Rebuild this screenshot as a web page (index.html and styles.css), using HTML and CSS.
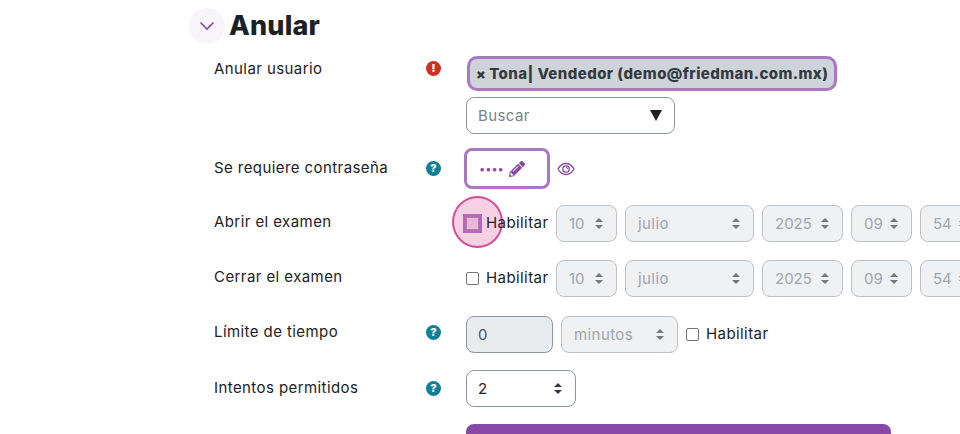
FILE: index.html
```html
<!DOCTYPE html>
<html lang="es">
<head>
<meta charset="utf-8">
<title>Anular</title>
<link rel="stylesheet" href="styles.css">
</head>
<body>
<main class="page">
  <header class="head">
    <span class="toggle"><svg width="16" height="10" viewBox="0 0 16 10"><path d="M1.500 1.500 8 8l6.500-6.500" fill="none" stroke="#8a48a6" stroke-width="1.600"/></svg></span>
    <h2 class="title">Anular</h2>
  </header>

  <section class="row row-user">
    <div class="label">Anular usuario</div>
    <div class="hint"><span class="dot red">!</span></div>
    <div class="field stack">
      <span class="tag"><b class="x">×</b> Tona| Vendedor (demo@friedman.com.mx)</span>
      <div class="search"><span>Buscar</span><span class="tri"></span></div>
    </div>
  </section>

  <section class="row row-pass">
    <div class="label">Se requiere contraseña</div>
    <div class="hint"><span class="dot teal">?</span></div>
    <div class="field inline">
      <span class="passbox"><span class="dots">••••</span>
        <svg width="16" height="16" viewBox="0 0 512 512"><path fill="#8a48a6" d="M497.900 142.100l-46.100 46.100c-4.700 4.700-12.300 4.700-17 0l-111-111c-4.700-4.700-4.700-12.300 0-17l46.100-46.100c18.700-18.700 49.100-18.700 67.900 0l60.100 60.100c18.800 18.700 18.800 49.100 0 67.900zM284.200 99.800L21.600 362.400.4 483.900c-2.900 16.400 11.400 30.600 27.800 27.800l121.500-21.300 262.600-262.600c4.700-4.700 4.700-12.300 0-17l-111-111c-4.800-4.700-12.400-4.700-17.100 0zM124.100 339.900c-5.500-5.500-5.500-14.300 0-19.800l154-154c5.500-5.500 14.300-5.500 19.800 0s5.500 14.300 0 19.800l-154 154c-5.500 5.500-14.300 5.500-19.800 0zM88 424h48v36.300l-64.500 11.300-31.100-31.100L51.700 376H88v48z"/></svg>
      </span>
      <svg class="eye" width="18" height="14" viewBox="0 0 18 14"><path d="M1 7c2-3.600 4.800-5.500 8-5.500S15 3.400 17 7c-2 3.600-4.800 5.500-8 5.500S3 10.600 1 7z" fill="none" stroke="#8a48a6" stroke-width="1.300"/><circle cx="9" cy="7" r="3.200" fill="none" stroke="#8a48a6" stroke-width="1.300"/><path d="M9 5.400a1.600 1.600 0 0 1 1.600 1.600" fill="none" stroke="#8a48a6" stroke-width="1"/></svg>
    </div>
  </section>

  <section class="row row-open">
    <div class="label">Abrir el examen</div>
    <div class="hint"></div>
    <div class="field inline dates">
      <label class="check focus"><span class="box"></span><span class="halo"></span><span class="cap">Habilitar</span></label>
      <span class="sel off w61">10<i class="arrows"></i></span>
      <span class="sel off w129 word">julio<i class="arrows"></i></span>
      <span class="sel off w81">2025<i class="arrows"></i></span>
      <span class="sel off w61">09<i class="arrows"></i></span>
      <span class="sel off w61">54<i class="arrows"></i></span>
    </div>
  </section>

  <section class="row row-close">
    <div class="label">Cerrar el examen</div>
    <div class="hint"></div>
    <div class="field inline dates">
      <label class="check"><span class="box"></span><span class="cap">Habilitar</span></label>
      <span class="sel off w61">10<i class="arrows"></i></span>
      <span class="sel off w129 word">julio<i class="arrows"></i></span>
      <span class="sel off w81">2025<i class="arrows"></i></span>
      <span class="sel off w61">09<i class="arrows"></i></span>
      <span class="sel off w61">54<i class="arrows"></i></span>
    </div>
  </section>

  <section class="row row-limit">
    <div class="label">Límite de tiempo</div>
    <div class="hint"><span class="dot teal">?</span></div>
    <div class="field inline limit">
      <span class="num">0</span>
      <span class="sel off w117 word">minutos<i class="arrows"></i></span>
      <label class="check"><span class="box"></span><span class="cap">Habilitar</span></label>
    </div>
  </section>

  <section class="row row-tries">
    <div class="label">Intentos permitidos</div>
    <div class="hint"><span class="dot teal">?</span></div>
    <div class="field inline">
      <span class="sel w110">2<i class="arrows dark"></i></span>
    </div>
  </section>

  <div class="actions"><span class="primary"></span></div>
</main>
</body>
</html>
```
FILE: styles.css
```css
* { box-sizing: border-box; }
html, body { margin: 0; height: 434px; overflow: hidden; background: #fff; }
body { font-family: Inter, "Liberation Sans", sans-serif; font-size: 15px; letter-spacing: .42px; color: #1d2125; }
.page { width: 960px; height: 434px; overflow: hidden; padding: 8px 0 0 189px; }

.head { display: flex; align-items: center; gap: 4px; height: 35px; }
.toggle { width: 36px; height: 36px; border-radius: 50%; background: #f8f5fa; display: flex; align-items: center; justify-content: center; }
.title { margin: 0; font-size: 27px; line-height: 35px; font-weight: 800; letter-spacing: .2px; color: #1d2125; }

.row { display: grid; grid-template-columns: 212px 40px 1fr; margin-left: 25px; width: 746px; }
.label { line-height: 22px; }
.hint { display: flex; justify-content: flex-start; }
.dot { width: 15px; height: 15px; border-radius: 50%; color: #fff; font-size: 11px; font-weight: 800; letter-spacing: 0; display: flex; align-items: center; justify-content: center; line-height: 1; }
.red { background: #ca3120; }
.teal { background: #0f8096; }
.field { min-width: 0; }
.stack { display: flex; flex-direction: column; align-items: flex-start; gap: 6px; }
.inline { display: flex; align-items: center; white-space: nowrap; }

.row-user { margin-top: 13px; }
.row-user .label { padding-top: 2px; }
.row-user .hint { padding-top: 5px; }
.tag { height: 35px; width: 370px; margin-left: 1px; padding: 0 6px; display: flex; align-items: center; gap: 3px; border: 3px solid #a878c0; border-radius: 10px; background: #ced4da; font-weight: 800; font-size: 15px; letter-spacing: .42px; color: #343a40; white-space: nowrap; }
.x { font-size: 14px; }
.search { width: 209px; height: 37px; padding: 0 12px 0 11px; display: flex; align-items: center; justify-content: space-between; border: 1px solid #8f959e; border-radius: 8px; color: #7a828a; }
.tri { width: 0; height: 0; border-left: 6px solid transparent; border-right: 6px solid transparent; border-top: 11px solid #1d2125; }

.row-pass { margin-top: 14px; height: 41px; }
.row-pass .label { padding-top: 9px; }
.row-pass .hint { padding-top: 13px; }
.passbox { width: 86px; height: 41px; margin-left: -2px; padding: 0 0 0 12px; border: 3px solid #a878c0; border-radius: 8px; display: inline-flex; align-items: center; gap: 5px; color: #8a48a6; }
.dots { font-size: 11px; letter-spacing: 0; }
.eye { margin-left: 7px; }

.row-open { margin-top: 16px; height: 37px; }
.row-open .label { padding-top: 6px; }
.row-close { margin-top: 18px; height: 37px; }
.row-close .label { padding-top: 6px; }
.dates { gap: 8px; }

.check { position: relative; display: inline-flex; align-items: center; gap: 7px; }
.cap { position: relative; top: -1px; }
.box { width: 13px; height: 13px; border: 1px solid #767676; border-radius: 2px; background: #fff; flex: none; }
.dates .check { width: 82px; }
.focus .box { outline: 3px solid #a878c0; background: #eee0ee; border-color: #b48cc6; border-radius: 0; }
.halo { position: absolute; left: -14.500px; top: 50%; width: 51px; height: 52px; margin-top: -28px; border: 2px solid #d84e94; border-radius: 50%; background: rgba(216, 60, 140, .24); pointer-events: none; }

.sel { height: 37px; flex: none; padding: 0 12px; display: inline-flex; align-items: center; justify-content: space-between; border: 1px solid #8f959e; border-radius: 8px; background: #fff; color: #1d2125; font-size: 15px; letter-spacing: 0; }
.word { letter-spacing: .42px; }
.off { background: #eff1f3; border-color: #bcc1c7; color: #a0a6ac; }
.w61 { width: 61px; } .w129 { width: 129px; } .w81 { width: 81px; } .w117 { width: 117px; } .w110 { width: 110px; padding-left: 11px; }
.arrows { display: block; width: 9px; height: 11px; position: relative; flex: none; opacity: .65; }
.arrows::before, .arrows::after { content: ""; position: absolute; left: 0; border-left: 4px solid transparent; border-right: 4px solid transparent; }
.arrows::before { top: 0; border-bottom: 4.500px solid #343a40; }
.arrows::after { bottom: 0; border-top: 4.500px solid #343a40; }
.arrows.dark { opacity: 1; }

.row-limit { margin-top: 19px; height: 37px; }
.row-limit .label { padding-top: 5px; }
.row-limit .hint { padding-top: 9px; }
.limit { gap: 8px; }
.num { width: 87px; height: 37px; padding: 0 11px; display: flex; align-items: center; border: 1px solid #8f959e; border-radius: 8px; background: #e9ecef; color: #4a5560; }
.row-tries { margin-top: 17px; height: 37px; }
.row-tries .label { padding-top: 7px; }
.row-tries .hint { padding-top: 11px; }

.actions { margin: 17px 0 0 277px; }
.primary { display: block; width: 425px; height: 37px; border-radius: 8px; background: #8a48a6; }
```
